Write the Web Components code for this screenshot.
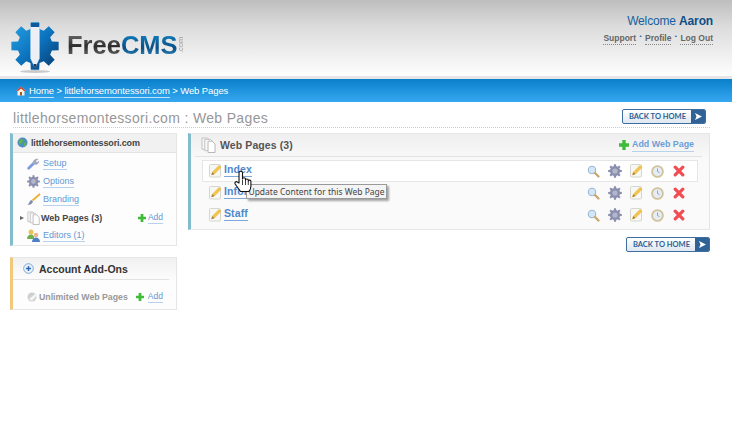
<!DOCTYPE html>
<html><head><meta charset="utf-8"><style>
html,body{margin:0;padding:0;background:#fff;font-family:"Liberation Sans",Arial,sans-serif}
</style></head><body>
<fc-header></fc-header>
<fc-crumbs></fc-crumbs>
<fc-title></fc-title>
<fc-layout>
  <div slot="side">
    <fc-sitebox></fc-sitebox>
    <fc-addons></fc-addons>
  </div>
  <div slot="main">
    <fc-pages></fc-pages>
    <fc-back style="margin:7px 0 0 438px"></fc-back>
  </div>
</fc-layout>
<script>
function gearPath(cx,cy,R,r,teeth,a1,a2){let d='';const p=(rad,deg)=>{const t=(deg-90)*Math.PI/180;return (cx+rad*Math.cos(t)).toFixed(2)+' '+(cy+rad*Math.sin(t)).toFixed(2)};
 for(let i=0;i<teeth;i++){const c=i*360/teeth;d+=(i?'L':'M')+p(r,c-a1)+'L'+p(R,c-a2)+'L'+p(R,c+a2)+'L'+p(r,c+a1);}return d+'Z';}
const gearIcon=(s=14)=>`<svg width="${s}" height="${s}" viewBox="0 0 14 14"><path d="${gearPath(7,7,6.900,5.100,8,13,9)}" fill="#8b8fae"/><circle cx="7" cy="7" r="2.600" fill="#b4b7cc"/></svg>`;
const ICONS={
 edit:`<svg width="13" height="14" viewBox="0 0 13 14"><rect x=".5" y=".5" width="11" height="12.500" rx="1" fill="#f7f7f3" stroke="#d6d6ce"/><path d="M2.500 11l.9-2.800L9.200 2.300c.6-.6 1.300-.6 1.900 0s.6 1.300 0 1.900L5.300 10.100z" fill="#f4c64a" stroke="#dca52c" stroke-width=".5"/><path d="M2.500 11l.9-2.800 1.900 1.900z" fill="#9a7a4a"/></svg>`,
 search:`<svg width="13" height="13" viewBox="0 0 13 13"><circle cx="5" cy="5" r="3.700" fill="#d3e6f7" stroke="#9cb6d4" stroke-width="1.100"/><path d="M8 8l3.500 3.500" stroke="#c6a66c" stroke-width="2.200" stroke-linecap="round"/></svg>`,
 clock:`<svg width="13" height="13" viewBox="0 0 13 13"><circle cx="6.500" cy="6.500" r="5.400" fill="#e6edf5" stroke="#d2c29c" stroke-width="1.800"/><path d="M6.500 3.500v3l2 1.200" fill="none" stroke="#8aa3c2" stroke-width="1"/></svg>`,
 x:`<svg width="12" height="12" viewBox="0 0 12 12"><path d="M2.200 2.200l7.600 7.600M9.800 2.200L2.200 9.800" stroke="#f04c52" stroke-width="3.200" stroke-linecap="round"/></svg>`,
 pages:(w,h)=>`<svg width="${w}" height="${h}" viewBox="0 0 16 17"><path d="M1 1h6l2 2v10H1z" fill="#f6f6f6" stroke="#c0c0c0"/><path d="M4 2.500h6l2 2v10H4z" fill="#f8f8f8" stroke="#c0c0c0"/><path d="M7.500 4.500h4.500l3 3v9H7.500z" fill="#fff" stroke="#b4b4b4"/></svg>`,
 plus:(s)=>`<svg width="${s}" height="${s}" viewBox="0 0 10 10"><path d="M3.300 0h3.400v3.300H10v3.400H6.700V10H3.300V6.700H0V3.300h3.300z" fill="#3fbb3a"/></svg>`
};
function def(name,css,html){customElements.define(name,class extends HTMLElement{constructor(){super();this.attachShadow({mode:'open'}).innerHTML=`<style>${css}</style>${typeof html==='function'?html(this):html}`;}});}

def('fc-header',`
:host{display:flex;justify-content:space-between;height:76px;box-sizing:border-box;background:linear-gradient(#bfbebe,#dcdcdc 35%,#fbfbfb 95%,#fff);font-family:"Liberation Sans",Arial,sans-serif;padding:0 19px 0 11px;margin-bottom:3px;box-shadow:0 3px 0 #e6e6e6}
.logo{display:flex;align-items:flex-start;padding-top:22px}
.logo svg{flex:none}
.brand{font:bold 25.500px/30px "Liberation Sans",Arial,sans-serif;margin:8px 0 0 8px;white-space:nowrap}
.free{background:linear-gradient(#7a7a7a,#2c2c2c 55%,#777);-webkit-background-clip:text;background-clip:text;color:transparent}
.cms{background:linear-gradient(#1489cc,#0a4f86 60%,#3a95c8);-webkit-background-clip:text;background-clip:text;color:transparent}
.com{font:7.500px/7px "Liberation Sans",Arial,sans-serif;color:#9a9a9a;writing-mode:vertical-rl;transform:rotate(180deg);margin:13px 0 0 -1px;height:18px;text-align:left}
.user{text-align:right;padding-top:14px}
.w{font-size:12px;line-height:14px;color:#15609f;letter-spacing:-.15px}
.w b{color:#0d4f87}
.l{font-size:8.500px;line-height:12px;font-weight:bold;color:#666;margin-top:4px;white-space:nowrap;display:flex;justify-content:flex-end}
.l a{border-bottom:1px dotted #888;padding-bottom:0}
.l i{font-style:normal;color:#15609f;width:9px;text-align:center;font-size:6px;line-height:9px}
`,`<div class="logo">
<svg width="48" height="52" viewBox="0 0 48 52"><defs><linearGradient id="g" x1="0" y1="0" x2="1" y2="1"><stop offset="0" stop-color="#27a3e2"/><stop offset=".5" stop-color="#0d74c0"/><stop offset="1" stop-color="#06386a"/></linearGradient></defs>
<ellipse cx="24" cy="49.500" rx="15" ry="1.500" fill="#b5b5b5" opacity=".7"/>
<path d="${gearPath(24,24,24,17.500,8,15,10)}" fill="url(#g)"/>
<path d="M19.800 3.500h8.400v33l-4.200 9-4.200-9z" fill="#eceff5" stroke="#fff" stroke-width=".6"/><path d="M19.800 1h8.400v4h-8.400z" fill="#0c5b9c"/><path d="M22.500 42h3L24 47.500z" fill="#1b3a5c"/></svg>
<div class="brand"><span class="free">Free</span><span class="cms">CMS</span></div><div class="com">.com</div></div>
<div class="user"><div class="w">Welcome <b>Aaron</b></div><div class="l"><a>Support</a><i>•</i><a>Profile</a><i>•</i><a>Log Out</a></div></div>`);

def('fc-crumbs',`
:host{display:flex;align-items:center;height:23px;background:linear-gradient(#0a7fcb,#35a8f0);color:#fff;font:9.500px/12px "Liberation Sans",Arial,sans-serif;letter-spacing:-.1px;padding:1px 0 0 16px;box-sizing:border-box}
svg{margin-right:3px}
a{border-bottom:1px solid #bfe2fa}
span{white-space:pre}
`,`<svg width="10" height="10" viewBox="0 0 10 10"><path d="M5 .5L0 5h1.500v4.500h7V5H10z" fill="#f5efe0"/><path d="M5 .5L0 5h2L5 2.500 8 5h2z" fill="#c8402a"/><rect x="4" y="6" width="2" height="3.500" fill="#a8572a"/></svg><a>Home</a><span> &gt; </span><a>littlehorsemontessori.com</a><span> &gt; Web Pages</span>`);

def('fc-back',`
:host{display:flex;width:84px;height:15px;box-sizing:border-box;border:1px solid #3f6d9f;border-radius:2px;overflow:hidden;font:bold 7.500px/13px "Lato","Liberation Sans",sans-serif;color:#2c5f94;background:linear-gradient(#fff,#dfe7f1)}
.t{flex:1;text-align:center;padding-left:1px;white-space:nowrap}
.a{width:14px;background:#2f6398;display:flex;align-items:center;justify-content:center}
`,`<div class="t">BACK TO HOME</div><div class="a"><svg width="7" height="7" viewBox="0 0 7 7"><path d="M0 0l7 3.500L0 7l1.500-3.500z" fill="#fff"/></svg></div>`);

def('fc-title',`
:host{display:flex;justify-content:space-between;height:26px;margin:0 22px 0 13px;border-bottom:1px dotted #ccc;box-sizing:border-box;font:14px/33px "Liberation Sans",Arial,sans-serif;color:#979797;letter-spacing:.34px}
fc-back{margin:7px 4px 0 0;letter-spacing:0}
`,`<div>littlehorsemontessori.com : Web Pages</div><fc-back></fc-back>`);

def('fc-layout',`
:host{display:grid;grid-template-columns:167px 522px;column-gap:11px;padding:5px 0 0 10px}
`,`<slot name="side"></slot><slot name="main"></slot>`);

def('fc-sitebox',`
:host{display:block;width:167px;height:113px;box-sizing:border-box;border:1px solid #e6e6e6;border-left:3px solid #82bccf;font:9px/12px "Liberation Sans",Arial,sans-serif;background:#fdfdfd}
.h{display:flex;align-items:center;height:17px;background:#f1f1f1;border-bottom:1px solid #e3e3e3;font-weight:bold;color:#444;padding:0 0 1px 4px;font-size:9px;letter-spacing:-.15px}
.h svg{margin-right:3px}
.r{display:flex;align-items:center;height:18.200px;padding-left:14px}
.i{width:16px;flex:none;display:flex;align-items:center}
a{border-bottom:1px solid #b8d2ee;color:#6498d4}
.r b{color:#444;margin-left:-2px}
.ar{position:absolute;margin-left:-7px;width:0;height:0;border-left:4px solid #666;border-top:2.500px solid transparent;border-bottom:2.500px solid transparent}
.add{margin-left:auto;margin-right:13px;display:flex;align-items:center;gap:2px;font-size:8.500px}
`,`<div class="h"><svg width="11" height="11" viewBox="0 0 11 11"><circle cx="5.500" cy="5.500" r="5" fill="#4d8fc0"/><path d="M2 3c2-2 4-1 4 1S3 6 3 8 1 5 2 3zM7 6c2-1 3 0 2 2S6 9 7 6z" fill="#5fb34a"/></svg>littlehorsemontessori.com</div>
<div class="r" style="margin-top:1px"><div class="i"><svg width="13" height="13" viewBox="0 0 13 13"><path d="M1.700 11.300L7 6" stroke="#7f9be0" stroke-width="2.800" stroke-linecap="round"/><path d="M6 7c-1-3 2-6 5.500-5L9 4l1 1.500L12 3.500c1 3-3 5.500-6 3.500z" fill="#a3aabf"/></svg></div><a>Setup</a></div>
<div class="r"><div class="i">${gearIcon(13)}</div><a>Options</a></div>
<div class="r"><div class="i"><svg width="14" height="13" viewBox="0 0 14 13"><path d="M13 1L5.500 7.500" stroke="#e7b12d" stroke-width="1.700"/><path d="M.5 11.500c2.500.8 5-.5 5.500-3L4.300 7C2.500 7.500 2.500 10.500.5 11.500z" fill="#7f8cb4"/></svg></div><a>Branding</a></div>
<div class="r"><span class="ar"></span><div class="i">${ICONS.pages(13,14)}</div><b>Web Pages (3)</b><span class="add">${ICONS.plus(8)}<a>Add</a></span></div>
<div class="r"><div class="i"><svg width="13" height="13" viewBox="0 0 13 13"><circle cx="4" cy="3" r="2.500" fill="#e9c15b"/><path d="M0 10c0-3 2-4.500 4-4.500S7 7 7 8v2z" fill="#6fb14a"/><circle cx="9" cy="6" r="2.300" fill="#eeb48c"/><path d="M5 13c0-3 2-4.500 4-4.500s4 1.500 4 4.500z" fill="#4f7fc9"/></svg></div><a>Editors (1)</a></div>`);

def('fc-addons',`
:host{display:block;width:167px;height:53px;margin-top:11px;box-sizing:border-box;border:1px solid #e6e6e6;border-left:3px solid #f1c97d;font:8.750px/12px "Liberation Sans",Arial,sans-serif;background:linear-gradient(#f1f1f1,#fdfdfd 45%)}
.h{display:flex;align-items:center;height:21px;margin:0 7px 0 0;padding:0 0 0 10px;border-bottom:1px solid #e3e3e3;font:bold 10.500px/12px "Liberation Sans",Arial,sans-serif;color:#333}
.h svg{margin-right:5px}
.r{display:flex;align-items:center;padding:10px 0 0 14px;font-weight:bold;color:#999;white-space:nowrap}
.r svg{margin-right:1px}
.add{display:flex;align-items:center;gap:3px;margin-left:8px;font-weight:normal;font-size:8.500px}
a{border-bottom:1px solid #b8d2ee;color:#6498d4}
`,`<div class="h"><svg width="11" height="11" viewBox="0 0 11 11"><circle cx="5.500" cy="5.500" r="4.800" fill="#eaf2fb" stroke="#7ea6d6"/><path d="M5.500 3v5M3 5.500h5" stroke="#2d68b5" stroke-width="1.400"/></svg>Account Add-Ons</div>
<div class="r"><svg width="11" height="10" viewBox="0 0 11 10"><circle cx="5" cy="5" r="4.500" fill="#cfcfcf"/><path d="M2 7l6-5 2 1-5 6z" fill="#f4f4f4"/></svg>Unlimited Web Pages<span class="add">${ICONS.plus(8)}<a>Add</a></span></div>`);

def('fc-row',`
:host{display:flex;align-items:center;height:22px;box-sizing:border-box;padding:0 0 0 6px;border:1px solid transparent;font:bold 10.500px/13px "Liberation Sans",Arial,sans-serif;color:#4f88cc;position:relative}
:host([active]){border-color:#e6e6e6;background:#fff}
a{border-bottom:1px solid #7ea8dc;margin:-3px 0 0 2px;letter-spacing:.1px}
.ac{margin-left:auto;display:grid;grid-template-columns:repeat(5,21.500px);justify-items:center;align-items:center;margin-right:7px}
.ac>*{display:block}
`,(el)=>`<span style="display:flex">${ICONS.edit}</span><a>${el.getAttribute('name')}</a><div class="ac">${ICONS.search}${gearIcon(14)}${ICONS.edit}${ICONS.clock}${ICONS.x}</div>`);

def('fc-pages',`
:host{display:block;width:522px;height:97px;box-sizing:border-box;border:1px solid #e6e6e6;border-left:3px solid #82bccf;background:linear-gradient(#efefef,#fafafa 28px,#fafafa);font:bold 10.500px/13px "Liberation Sans",Arial,sans-serif;position:relative}
.h{display:flex;align-items:center;height:22px;margin:0 7px 0 4px;padding:0 8px 0 6px;border-bottom:1px solid #e3e3e3;color:#555;letter-spacing:.1px}
.h>svg{margin-right:4px}
.add{margin-left:auto;display:flex;align-items:center;gap:3px;font-size:8.900px;letter-spacing:0;color:#6c9ed8}
.add a{border-bottom:1px solid #b8d2ee}
.rows{padding:3px 11px 0 11px}
.tip{position:absolute;left:55px;top:50px;box-sizing:border-box;width:141px;height:15px;background:#f4f4f4;border:1px solid #9a9a9a;font:8.500px/13px "Noto Sans","DejaVu Sans",sans-serif;color:#444;text-align:center;box-shadow:2px 2px 2px rgba(0,0,0,.35);white-space:nowrap;font-weight:normal}
.cur{position:absolute;left:43px;top:36px}
`,`<div class="h">${ICONS.pages(15,16)}<span>Web Pages (3)</span><span class="add">${ICONS.plus(10)}<a>Add Web Page</a></span></div>
<div class="rows"><fc-row name="Index" active></fc-row><fc-row name="Infor"></fc-row><fc-row name="Staff"></fc-row></div>
<div class="tip">Update Content for this Web Page</div>
<svg class="cur" width="18" height="23" viewBox="0 0 18 23"><path d="M5 13V3c0-2.400 3.500-2.400 3.500 0v6c0-1.600 3-1.600 3 0v1c0-1.400 2.800-1.400 2.800 0v1c0-1.200 2.600-1.200 2.600.2V16c0 3-1.500 5-2 5.500H6.500C5 19 3 17 1.200 14c-1-1.800 1-3 2.300-1.800z" fill="#fff" stroke="#111" stroke-width="1.100" stroke-linejoin="round"/><path d="M8.500 10v5M11.500 10v5M14.300 11v4" stroke="#111" stroke-width=".8"/></svg>`);
</script>
</body></html>
